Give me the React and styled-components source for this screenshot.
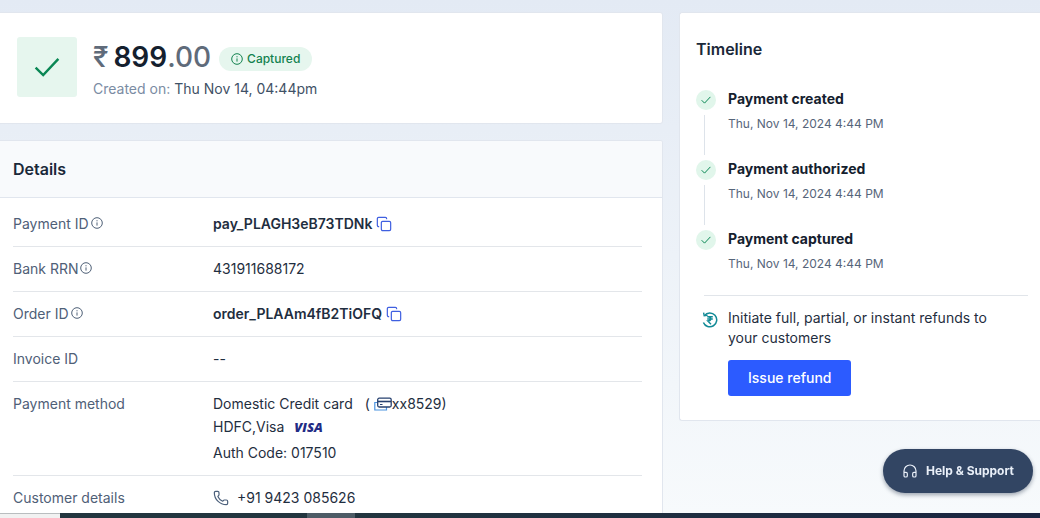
import React from 'react'
import styled, { createGlobalStyle } from 'styled-components'
import { Copy, Phone, Headphones } from 'lucide-react'

const events = [
  { title: 'Payment created', date: 'Thu, Nov 14, 2024 4:44 PM' },
  { title: 'Payment authorized', date: 'Thu, Nov 14, 2024 4:44 PM' },
  { title: 'Payment captured', date: 'Thu, Nov 14, 2024 4:44 PM' },
]

function CheckIcon({ size, stroke }) {
  return (
    <svg width={size} height={size} viewBox="0 0 24 24" fill="none" stroke="currentColor" strokeWidth={stroke} aria-hidden="true">
      <path d="M1.5 12.5 L8.5 19.5 L22.5 4.5" />
    </svg>
  )
}

function InfoIcon({ size = 12 }) {
  return (
    <svg width={size} height={size} viewBox="0 0 12 12" fill="none" stroke="currentColor" aria-hidden="true">
      <circle cx="6" cy="6" r="5.3" strokeWidth="1" />
      <path d="M6 5.4 V8.6 M6 3.2 V4.3" strokeWidth="1" />
    </svg>
  )
}

function CardsIcon() {
  return (
    <svg width="18" height="14" viewBox="0 0 18 14" fill="none" aria-hidden="true">
      <path d="M3.5 5.5 H.8 V13 H12.5 V10" stroke="#4b93e0" strokeWidth="1.2" />
      <rect x="3.7" y="1.2" width="13.5" height="8.8" rx="1.5" stroke="#26406f" strokeWidth="1.3" />
      <path d="M4 4.5 H17" stroke="#26406f" strokeWidth="1.6" />
      <path d="M6 7.5 H8.5" stroke="#26406f" />
    </svg>
  )
}

function RefundIcon() {
  return (
    <svg width="16" height="16" viewBox="0 0 16 16" fill="none" stroke="#128a96" aria-hidden="true">
      <path d="M2.4 3.6 A6.9 6.9 0 1 1 1.4 10.4" strokeWidth="1.5" />
      <path d="M1.6 .6 L2.2 3.8 L5.6 3.4" strokeWidth="1.4" />
      <path d="M5.2 4.8 H10.8 M5.2 7 H10.8 M5.8 4.8 C9.8 4.6 9.8 9 5.8 9 L9 12.2" strokeWidth="1.4" />
    </svg>
  )
}

function IdValue({ value }) {
  return (
    <Strong>
      {value}
      <CopyButton type="button" aria-label={`Copy ${value}`}>
        <Copy size={16} strokeWidth={1.8} />
      </CopyButton>
    </Strong>
  )
}

function Row({ label, info, children }) {
  return (
    <DetailRow>
      <dt>{label}{info && <InfoIcon />}</dt>
      <dd>{children}</dd>
    </DetailRow>
  )
}

function App() {
  return (
    <Page>
      <GlobalStyle />
      <Content>
        <Column>
          <Summary>
            <StatusTile><CheckIcon size={26} stroke={2.2} /></StatusTile>
            <SummaryText>
              <AmountLine>
                <Amount><span>₹</span><b>899</b><span>.00</span></Amount>
                <Badge><InfoIcon />Captured</Badge>
              </AmountLine>
              <Created><span>Created on:</span> Thu Nov 14, 04:44pm</Created>
            </SummaryText>
          </Summary>

          <DetailsCard>
            <DetailsHead><Heading>Details</Heading></DetailsHead>
            <DetailList>
              <Row label="Payment ID" info><IdValue value="pay_PLAGH3eB73TDNk" /></Row>
              <Row label="Bank RRN" info>431911688172</Row>
              <Row label="Order ID" info><IdValue value="order_PLAAm4fB2TiOFQ" /></Row>
              <Row label="Invoice ID">--</Row>
              <Row label="Payment method">
                <Method>
                  <MethodLine>Domestic Credit card <CardNumber>( <CardsIcon />xx8529)</CardNumber></MethodLine>
                  <MethodLine>HDFC,Visa <Visa>VISA</Visa></MethodLine>
                  <AuthLine>Auth Code: 017510</AuthLine>
                </Method>
              </Row>
              <Row label="Customer details">
                <PhoneLine><Phone size={16} strokeWidth={1.8} />+91 9423 085626</PhoneLine>
              </Row>
            </DetailList>
          </DetailsCard>
        </Column>

        <Timeline>
          <Heading>Timeline</Heading>
          <Events>
            {events.map((event) => (
              <Event key={event.title}>
                <Marker><Dot><CheckIcon size={10} stroke={2.4} /></Dot></Marker>
                <div>
                  <EventTitle>{event.title}</EventTitle>
                  <EventDate>{event.date}</EventDate>
                </div>
              </Event>
            ))}
          </Events>
          <Refund>
            <RefundIcon />
            <div>
              <p>Initiate full, partial, or instant refunds to your customers</p>
              <RefundButton type="button">Issue refund</RefundButton>
            </div>
          </Refund>
        </Timeline>
      </Content>
      <Taskbar>
        <TaskStart />
        <TaskArea />
        <TaskActive />
        <TaskRest />
      </Taskbar>
      <Help type="button"><Headphones size={16} strokeWidth={1.8} />Help &amp; Support</Help>
    </Page>
  )
}

export default App

const GlobalStyle = createGlobalStyle`
  * {
    box-sizing: border-box;
  }

  body {
    margin: 0;
    font-family: Inter, "Noto Sans", sans-serif;
    font-size: 14px;
    line-height: 20px;
    color: #1f2e40;
  }

  h2, p, dl, dd, ol {
    margin: 0;
    padding: 0;
  }

  button {
    font: inherit;
    border: 0;
    cursor: pointer;
  }

  svg {
    flex-shrink: 0;
  }
`
const Page = styled.div`
  display: flex;
  flex-direction: column;
  height: 100vh;
  overflow: hidden;
`
const Content = styled.main`
  flex: 1;
  min-height: 0;
  display: grid;
  grid-template-columns: minmax(0, 1fr) 361px;
  align-items: start;
  gap: 16px;
  padding-top: 12px;
  overflow: hidden;
  background: linear-gradient(#e3eaf4, #f7fafc);
`
const Column = styled.div`
  display: flex;
  flex-direction: column;
  gap: 16px;
`
const Card = styled.section`
  background: #fff;
  border: 1px solid #e1e6ee;
  border-left: 0;
  border-radius: 0 3px 3px 0;
`
const Summary = styled(Card)`
  display: flex;
  gap: 16px;
  padding: 24px 17px;
`
const StatusTile = styled.div`
  display: flex;
  align-items: center;
  justify-content: center;
  width: 60px;
  height: 60px;
  border-radius: 3px;
  color: #0a8754;
  background: #e6f6ee;
`
const SummaryText = styled.div`
  display: flex;
  flex-direction: column;
  gap: 2px;
`
const AmountLine = styled.div`
  display: flex;
  align-items: center;
  gap: 8px;
`
const Amount = styled.div`
  font-size: 28px;
  line-height: 40px;
  font-weight: 500;
  color: #5f6b7a;

  b {
    margin-left: 5px;
    font-weight: 600;
    color: #14202e;
  }
`
const Badge = styled.span`
  display: flex;
  align-items: center;
  gap: 4px;
  height: 24px;
  margin-top: 4px;
  padding: 0 12px;
  border-radius: 12px;
  font-size: 12px;
  font-weight: 500;
  color: #12824f;
  background: #e6f6ee;
`
const Created = styled.p`
  color: #3f5166;

  span {
    color: #7b8ca3;
  }
`
const DetailsCard = styled(Card)`
  overflow: hidden;
`
const DetailsHead = styled.header`
  padding: 18px 13px;
  border-bottom: 1px solid #e1e6ee;
  background: #f8fafc;
`
const Heading = styled.h2`
  font-size: 16px;
  line-height: 20px;
  font-weight: 600;
  color: #1a2839;
`
const DetailList = styled.dl`
  padding: 4px 20px 4px 13px;
`
const DetailRow = styled.div`
  display: grid;
  grid-template-columns: 200px 1fr;
  padding: 12px 0;
  border-bottom: 1px solid #e3e6ea;

  dt {
    display: flex;
    gap: 2px;
    color: #4f6077;
  }

  dt svg {
    margin-top: 3px;
  }
`
const Strong = styled.span`
  display: flex;
  align-items: center;
  gap: 4px;
  font-weight: 600;
`
const CopyButton = styled.button`
  display: flex;
  padding: 0;
  color: #3f5fe0;
  background: none;
`
const Method = styled.div`
  display: flex;
  flex-direction: column;
  gap: 3px;
`
const MethodLine = styled.div`
  display: flex;
  align-items: center;
  gap: 10px;
`
const CardNumber = styled.span`
  display: flex;
  align-items: center;
  margin-left: 2px;

  svg {
    margin-left: 4px;
  }
`
const AuthLine = styled(MethodLine)`
  margin-top: 3px;
`
const Visa = styled.span`
  font-family: "Open Sans", sans-serif;
  font-size: 13px;
  font-weight: 800;
  font-style: italic;
  color: #222b85;
`
const PhoneLine = styled.span`
  display: flex;
  align-items: center;
  gap: 8px;

  svg {
    color: #4b5f7a;
  }
`
const Timeline = styled.section`
  padding: 26px 12px 24px 16px;
  border: 1px solid #e1e6ee;
  border-right: 0;
  border-radius: 3px 0 0 3px;
  background: #fff;
`
const Events = styled.ol`
  margin-top: 31px;
  list-style: none;
`
const Marker = styled.div`
  display: flex;
  flex-direction: column;
  align-items: flex-start;
  width: 20px;
`
const Dot = styled.div`
  display: flex;
  align-items: center;
  justify-content: center;
  width: 20px;
  height: 20px;
  border-radius: 50%;
  color: #0a8754;
  background: #e1f6eb;
`
const Event = styled.li`
  display: flex;
  gap: 12px;
  min-height: 70px;

  &:not(:last-child) ${Marker}::after {
    content: '';
    width: 1px;
    height: 40px;
    margin: 5px 0 0 8px;
    background: #dde3ea;
  }

  &:last-child {
    min-height: 65px;
  }
`
const EventTitle = styled.div`
  line-height: 18px;
  font-weight: 700;
  color: #14202e;
`
const EventDate = styled.div`
  margin-top: 6px;
  font-size: 12px;
  color: #56657a;
`
const Refund = styled.div`
  display: flex;
  gap: 10px;
  margin-left: 8px;
  padding-top: 12px;
  border-top: 1px solid #e1e5ea;

  p {
    padding-right: 24px;
  }

  svg {
    margin-top: 4px;
    margin-left: -2px;
  }
`
const RefundButton = styled.button`
  height: 36px;
  margin-top: 12px;
  padding: 0 20px;
  border-radius: 3px;
  font-weight: 500;
  color: #fff;
  background: #2c5bff;
`
const Help = styled.button`
  position: fixed;
  right: 7px;
  bottom: 25px;
  display: flex;
  align-items: center;
  gap: 8px;
  height: 44px;
  padding: 0 19px;
  border-radius: 22px;
  font-size: 12px;
  font-weight: 700;
  color: #e9eff8;
  background: #324563;
  box-shadow: 0 2px 4px rgba(20, 35, 60, .4);
`
const Taskbar = styled.footer`
  display: flex;
  height: 5px;
`
const TaskStart = styled.div`
  width: 60px;
  border-top: 1px solid #b9bdbf;
  background: #f1f1f1;
`
const TaskArea = styled.div`
  width: 247px;
  background: #22353f;
`
const TaskActive = styled.div`
  width: 48px;
  background: #4d5c66;
`
const TaskRest = styled.div`
  flex: 1;
  background: linear-gradient(90deg, #22353f, #1a2541);
`
